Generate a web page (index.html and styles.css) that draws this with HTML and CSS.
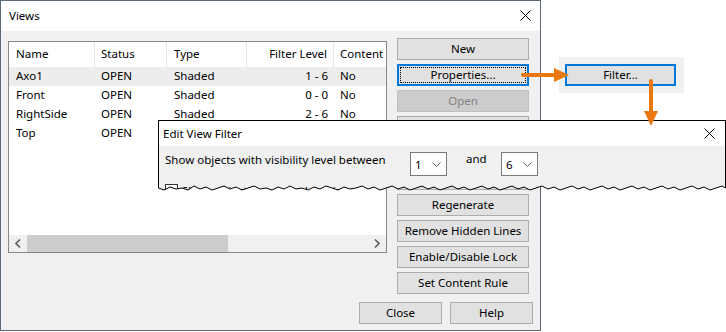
FILE: index.html
```html
<!DOCTYPE html>
<html lang="en">
<head>
  <meta charset="UTF-8">
  <title>Views</title>
  <link rel="stylesheet" href="styles.css">
</head>
<body>
  <div class="desk">

    <!-- Views window -->
    <div class="views">
      <div class="titlebar">
        <span class="title">Views</span>
        <svg class="close-x" width="11" height="11" viewBox="0 0 11 11"><path d="M0.5 0.5 L10.5 10.5 M10.5 0.5 L0.5 10.5" stroke="#000" stroke-width="1"/></svg>
      </div>
      <div class="views-body">
        <div class="main-row">
          <div class="list">
            <div class="grid head">
              <span class="cell">Name</span>
              <span class="cell">Status</span>
              <span class="cell">Type</span>
              <span class="cell num">Filter Level</span>
              <span class="cell">Content</span>
            </div>
            <div class="rows">
              <div class="grid row selected">
                <span class="cell">Axo1</span><span class="cell">OPEN</span><span class="cell">Shaded</span><span class="cell num">1 - 6</span><span class="cell">No</span>
              </div>
              <div class="grid row">
                <span class="cell">Front</span><span class="cell">OPEN</span><span class="cell">Shaded</span><span class="cell num">0 - 0</span><span class="cell">No</span>
              </div>
              <div class="grid row">
                <span class="cell">RightSide</span><span class="cell">OPEN</span><span class="cell">Shaded</span><span class="cell num">2 - 6</span><span class="cell">No</span>
              </div>
              <div class="grid row">
                <span class="cell">Top</span><span class="cell">OPEN</span>
              </div>
            </div>
            <div class="hscroll">
              <span class="arrow">
                <svg width="6" height="9" viewBox="0 0 6 9"><path d="M5 0.5 L1 4.5 L5 8.5" stroke="#606060" stroke-width="1.6" fill="none"/></svg>
              </span>
              <span class="track"><span class="thumb"></span></span>
              <span class="arrow">
                <svg width="6" height="9" viewBox="0 0 6 9"><path d="M1 0.5 L5 4.5 L1 8.5" stroke="#606060" stroke-width="1.6" fill="none"/></svg>
              </span>
            </div>
          </div>

          <div class="side-buttons">
            <button class="btn">New</button>
            <button class="btn focused">Properties...</button>
            <button class="btn" disabled>Open</button>
            <!-- three buttons hidden under the Edit View Filter dialog -->
            <button class="btn"></button>
            <button class="btn"></button>
            <button class="btn"></button>
            <button class="btn">Regenerate</button>
            <button class="btn">Remove Hidden Lines</button>
            <button class="btn">Enable/Disable Lock</button>
            <button class="btn">Set Content Rule</button>
          </div>
        </div>

        <div class="footer">
          <button class="btn wide">Close</button>
          <button class="btn wide">Help</button>
        </div>
      </div>
    </div>

    <!-- Properties dialog, cropped to its Filter button -->
    <div class="filter-panel">
      <button class="btn active">Filter...</button>
    </div>

    <!-- Edit View Filter dialog, torn off at the bottom -->
    <div class="dialog">
      <div class="dialog-title">
        <span class="title">Edit View Filter</span>
        <svg class="close-x" width="11" height="11" viewBox="0 0 11 11"><path d="M0.5 0.5 L10.5 10.5 M10.5 0.5 L0.5 10.5" stroke="#000" stroke-width="1"/></svg>
      </div>
      <div class="dialog-body">
        <div class="level-row">
          <span class="level-label">Show objects with visibility level between</span>
          <span class="combo">
            <span class="combo-value">1</span>
            <svg width="9" height="5" viewBox="0 0 9 5"><path d="M0.5 0.5 L4.5 4.5 L8.5 0.5" stroke="#606060" stroke-width="1" fill="none"/></svg>
          </span>
          <span class="and">and</span>
          <span class="combo">
            <span class="combo-value">6</span>
            <svg width="9" height="5" viewBox="0 0 9 5"><path d="M0.5 0.5 L4.5 4.5 L8.5 0.5" stroke="#606060" stroke-width="1" fill="none"/></svg>
          </span>
        </div>
        <div class="check-row">
          <span class="checkbox"></span>
          <span>Show objects in vertical section</span>
        </div>
      </div>
    </div>

    <svg class="torn" width="570" height="76" viewBox="0 0 570 76">
      <polyline fill="none" stroke="#000" stroke-width="1"
        points="0.5,68 6,70 12,67 18,69 24,68 30,70 36,66 42,69 48,67 54,70 60,68 66,66 72,69 78,67 84,70 90,68 96,66 102,69 108,68 114,70 120,67 126,69 132,66 138,69 144,68 150,70 156,67 162,69 168,66 174,68 180,70 186,67 192,69 198,68 204,66 210,69 216,67 222,70 228,68 234,66 240,69 246,67 252,70 258,68 264,66 270,69 276,67 282,70 288,68 294,66 300,69 306,67 312,70 318,68 324,66 330,69 336,67 342,70 348,68 354,66 360,69 366,67 372,70 378,68 384,66 390,69 396,67 402,70 408,68 414,66 420,69 426,67 432,70 438,68 444,66 450,69 456,67 462,70 468,68 474,66 480,69 486,67 492,70 498,68 504,66 510,69 516,67 522,70 528,68 534,66 540,69 546,67 552,70 558,68 564,66 567.5,68"/>
    </svg>

    <!-- callout arrows -->
    <svg class="arrows" width="726" height="332" viewBox="0 0 726 332">
      <line x1="523" y1="75" x2="556" y2="75" stroke="#e9780e" stroke-width="4" stroke-linecap="round"/>
      <polygon points="554,68 569,75 554,82" fill="#e9780e"/>
      <line x1="651" y1="81" x2="651" y2="113" stroke="#e9780e" stroke-width="4" stroke-linecap="round"/>
      <polygon points="644,111 658,111 651,126" fill="#e9780e"/>
    </svg>
  </div>
</body>
</html>
```

FILE: styles.css
```css
body {
  margin: 0;
  font-family: 'Noto Sans', sans-serif;
  font-size: 11.5px;
  color: #000;
  background-color: #fff;
}

.desk {
  position: relative;
  width: 726px;
  height: 332px;
  overflow: hidden;
  background-color: #fff;
}

/* Views window */
.views {
  position: absolute;
  left: 0;
  top: 0;
  width: 541px;
  height: 331px;
  box-sizing: border-box;
  border: 1px solid #5b6875;
  background-color: #f0f0f0;
  display: flex;
  flex-direction: column;
}

.titlebar {
  height: 30px;
  flex: none;
  background-color: #fff;
  display: flex;
  align-items: center;
  justify-content: space-between;
  padding: 0 9px 1px 8px;
  box-sizing: border-box;
}

.views-body {
  flex: 1;
  display: flex;
  flex-direction: column;
  padding: 0 7px 6px 7px;
}

.main-row {
  display: flex;
  align-items: flex-start;
}

/* list view */
.list {
  width: 379px;
  height: 212px;
  margin-top: 10px;
  box-sizing: border-box;
  border: 1px solid #828790;
  background-color: #fff;
  display: flex;
  flex-direction: column;
  overflow: hidden;
}

.grid {
  display: grid;
  grid-template-columns: 86px 72px 80px 87px 60px;
  white-space: nowrap;
}

.head {
  height: 25px;
  line-height: 24px;
}

.head .cell {
  border-right: 1px solid #e5e5e5;
}

.cell {
  padding-left: 7px;
  overflow: hidden;
}

.cell:nth-child(n+2) {
  padding-left: 6px;
}

.cell:nth-child(3) {
  padding-left: 7px;
}

.cell.num {
  text-align: right;
  padding-right: 6px;
}

.rows {
  flex: 1;
}

.row {
  height: 19px;
  line-height: 18px;
}

.row.selected {
  background-color: #ededed;
}

.hscroll {
  height: 17px;
  display: flex;
  background-color: #f0f0f0;
}

.hscroll .arrow {
  width: 18px;
  display: flex;
  align-items: center;
  justify-content: center;
}

.hscroll .track {
  flex: 1;
  display: flex;
}

.hscroll .thumb {
  width: 201px;
  background-color: #cdcdcd;
}

/* buttons */
.btn {
  position: relative;
  height: 22px;
  padding: 0 0 2px 0;
  box-sizing: border-box;
  border: 1px solid #adadad;
  background-color: #e1e1e1;
  font-family: inherit;
  font-size: 11.5px;
  color: #000;
}

.btn:disabled {
  background-color: #cccccc;
  border-color: #bfbfbf;
  color: #838383;
}

.btn.focused,
.btn.active {
  border: 2px solid #0078d7;
}

.btn.focused::after {
  content: '';
  position: absolute;
  left: 1px;
  top: 1px;
  right: 1px;
  bottom: 1px;
  border: 1px dotted #000;
}

.side-buttons {
  width: 132px;
  margin: 7px 0 0 10px;
  display: flex;
  flex-direction: column;
  gap: 4px;
}

.footer {
  margin-top: auto;
  display: flex;
  justify-content: flex-end;
  gap: 8px;
}

.btn.wide {
  width: 83px;
}

/* cropped Properties dialog */
.filter-panel {
  position: absolute;
  left: 559px;
  top: 57px;
  width: 125px;
  height: 36px;
  box-sizing: border-box;
  padding: 7px 0 0 6px;
  background-color: #f0f0f0;
}

.filter-panel .btn {
  width: 111px;
}

/* Edit View Filter dialog */
.dialog {
  position: absolute;
  left: 158px;
  top: 120px;
  width: 568px;
  height: 76px;
  box-sizing: border-box;
  border: 1px solid #000;
  border-bottom: none;
  background-color: #f0f0f0;
  clip-path: polygon(0 0, 0 68px, 6px 70px, 12px 67px, 18px 69px, 24px 68px, 30px 70px, 36px 66px, 42px 69px, 48px 67px, 54px 70px, 60px 68px, 66px 66px, 72px 69px, 78px 67px, 84px 70px, 90px 68px, 96px 66px, 102px 69px, 108px 68px, 114px 70px, 120px 67px, 126px 69px, 132px 66px, 138px 69px, 144px 68px, 150px 70px, 156px 67px, 162px 69px, 168px 66px, 174px 68px, 180px 70px, 186px 67px, 192px 69px, 198px 68px, 204px 66px, 210px 69px, 216px 67px, 222px 70px, 228px 68px, 234px 66px, 240px 69px, 246px 67px, 252px 70px, 258px 68px, 264px 66px, 270px 69px, 276px 67px, 282px 70px, 288px 68px, 294px 66px, 300px 69px, 306px 67px, 312px 70px, 318px 68px, 324px 66px, 330px 69px, 336px 67px, 342px 70px, 348px 68px, 354px 66px, 360px 69px, 366px 67px, 372px 70px, 378px 68px, 384px 66px, 390px 69px, 396px 67px, 402px 70px, 408px 68px, 414px 66px, 420px 69px, 426px 67px, 432px 70px, 438px 68px, 444px 66px, 450px 69px, 456px 67px, 462px 70px, 468px 68px, 474px 66px, 480px 69px, 486px 67px, 492px 70px, 498px 68px, 504px 66px, 510px 69px, 516px 67px, 522px 70px, 528px 68px, 534px 66px, 540px 69px, 546px 67px, 552px 70px, 558px 68px, 564px 66px, 568px 68px, 568px 0);
}

.dialog-title {
  height: 25px;
  background-color: #fff;
  display: flex;
  align-items: center;
  justify-content: space-between;
  padding: 0 10px 1px 4px;
  box-sizing: border-box;
}

.dialog-body {
  padding: 6px 0 0 6px;
}

.level-row {
  display: flex;
  align-items: flex-start;
  height: 24px;
}

.level-label {
  width: 245px;
  line-height: 15px;
}

.and {
  width: 35px;
  padding-left: 19px;
  line-height: 14px;
}

.combo {
  width: 37px;
  height: 24px;
  box-sizing: border-box;
  border: 1px solid #7a7a7a;
  background-color: #fff;
  display: flex;
  align-items: center;
  justify-content: space-between;
  padding: 0 5px 0 4px;
}

.combo-value {
  color: #000;
}

.check-row {
  margin-top: 7px;
  display: flex;
  align-items: center;
  gap: 4px;
}

.checkbox {
  width: 13px;
  height: 13px;
  box-sizing: border-box;
  border: 1px solid #333;
  background-color: #fff;
}

.torn {
  position: absolute;
  left: 158px;
  top: 120px;
}

.arrows {
  position: absolute;
  left: 0;
  top: 0;
}
```
